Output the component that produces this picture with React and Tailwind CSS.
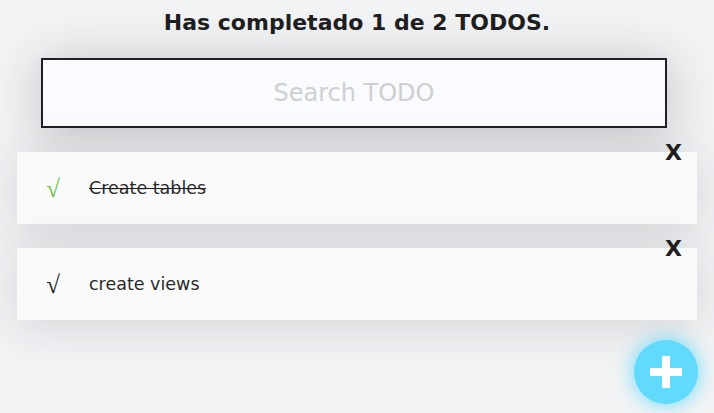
import React from "react";

const todos = [
  { text: "Create tables", completed: true },
  { text: "create views", completed: false },
];

function TodoItem({ text, completed }) {
  return (
    <li className="relative flex items-center h-[72px] bg-[#fafafa] shadow-[0_5px_50px_rgba(32,35,41,0.15)]">
      <span
        className={`w-[72px] text-center text-[25px] leading-none font-['Liberation_Serif',serif] ${
          completed ? "text-[#6cc24a]" : "text-[#1f1f1f]"
        }`}
      >
        √
      </span>
      <p
        className={`text-[17.5px] text-[#2a2a2a] ${
          completed ? "line-through decoration-[#1f1f1f]" : ""
        }`}
      >
        {text}
      </p>
      <span className="absolute right-[15px] top-[-10px] text-[22px] font-bold text-[#1f1f1f] leading-none">
        X
      </span>
    </li>
  );
}

export default function App() {
  const completed = todos.filter((t) => t.completed).length;

  return (
    <div className="relative h-[413px] w-full overflow-hidden bg-[#f2f3f5] font-['DejaVu_Sans',sans-serif]">
      <h1 className="pt-[9px] text-center text-[22px] font-bold text-[#1f1f1f] leading-[28px]">
        Has completado {completed} de {todos.length} TODOS.
      </h1>

      <div className="mt-[21px] pl-[41px]">
        <input
          className="w-[626px] h-[70px] border-2 border-[#1f2025] bg-[#f9fbfe] text-center text-[24px] text-[#333] placeholder:text-[#cfcfcf] shadow-[0_5px_50px_rgba(32,35,41,0.25)] outline-none"
          placeholder="Search TODO"
        />
      </div>

      <ul className="mt-[24px] px-[17px] flex flex-col gap-[24px]">
        {todos.map((t) => (
          <TodoItem key={t.text} {...t} />
        ))}
      </ul>

      <button className="absolute right-[16px] bottom-[9px] flex items-center justify-center w-[64px] h-[64px] rounded-full bg-[#61dafb] shadow-[0_0_20px_#61dafb] text-white">
        <svg width="34" height="34" viewBox="0 0 34 34">
          <rect x="13" y="1" width="8" height="32" fill="#fff" />
          <rect x="1" y="13" width="32" height="8" fill="#fff" />
        </svg>
      </button>
    </div>
  );
}
